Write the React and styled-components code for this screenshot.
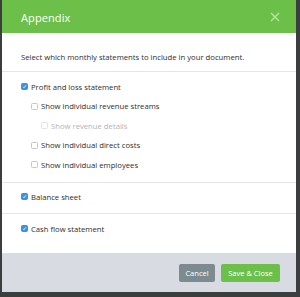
import React from "react";
import styled, { createGlobalStyle } from "styled-components";

const Global = createGlobalStyle`
  html, body { margin:0; padding:0; background:#3b3d3f; }
  body { font-family:"Open Sans", "Liberation Sans", sans-serif; }
`;

const Page = styled.div`
  width:300px;
  height:297px;
  overflow:hidden;
  padding-left:2px;
  box-sizing:border-box;
`;

const Modal = styled.div`
  width:294px;
  background:#fff;
  display:flex;
  flex-direction:column;
`;

const Header = styled.div`
  height:33px;
  background:#6cc04a;
  display:flex;
  align-items:center;
  justify-content:space-between;
  padding:1px 16px 0 19px;
  box-sizing:border-box;
`;

const Title = styled.div`
  color:#fff;
  font-size:11px;
  letter-spacing:0.1px;
`;

const Close = styled.button`
  background:none;
  border:none;
  padding:0;
  width:10px;
  height:10px;
  display:flex;
  cursor:pointer;
`;

const Intro = styled.div`
  padding:18px 19px 8px;
  font-size:7.7px;
  line-height:12px;
  color:#2e2e2e;
  border-bottom:1px solid #e6e6e6;
`;

const Section = styled.div`
  padding:${p => p.$pad};
  border-bottom:${p => (p.$last ? "none" : "1px solid #e6e6e6")};
`;

const Row = styled.label`
  display:flex;
  align-items:center;
  gap:3px;
  height:19.5px;
  padding-left:${p => 19 + p.$level * 10}px;
  font-size:7.7px;
  color:${p => (p.$disabled ? "#b3b3b3" : "#2e2e2e")};
`;

const Box = styled.span`
  width:7px;
  height:7px;
  border-radius:1.5px;
  box-sizing:border-box;
  border:1px solid ${p => (p.$checked ? "#3d8fe6" : p.$disabled ? "#e2e2e2" : "#c6c6c6")};
  background:${p => (p.$checked ? "#3d8fe6" : "#fff")};
  display:flex;
  align-items:center;
  justify-content:center;
`;

const Footer = styled.div`
  height:39px;
  background:#d8dce2;
  display:flex;
  align-items:center;
  justify-content:flex-end;
  gap:6px;
  padding:1px 16px 0 0;
  box-sizing:border-box;
`;

const Btn = styled.button`
  height:18px;
  width:${p => p.$w}px;
  padding:0;
  border:none;
  border-radius:2px;
  font-family:inherit;
  font-size:7.5px;
  color:#fff;
  background:${p => p.$bg};
  cursor:pointer;
`;

function Check({ checked, disabled, label, level = 0 }) {
  return (
    <Row $level={level} $disabled={disabled}>
      <Box $checked={checked} $disabled={disabled}>
        {checked && (
          <svg width="5" height="5" viewBox="0 0 10 10">
            <path d="M2 5.5l2 2 4-5" fill="none" stroke="#fff" strokeWidth="1.6" />
          </svg>
        )}
      </Box>
      {label}
    </Row>
  );
}

export default function App() {
  return (
    <Page>
      <Global />
      <Modal>
        <Header>
          <Title>Appendix</Title>
          <Close>
            <svg width="10" height="10" viewBox="0 0 10 10">
              <path d="M1 1l8 8M9 1l-8 8" stroke="#b2ea9c" strokeWidth="1.3" />
            </svg>
          </Close>
        </Header>
        <Intro>Select which monthly statements to include in your document.</Intro>
        <Section $pad="5px 0 7.5px">
          <Check checked label="Profit and loss statement" />
          <Check level={1} label="Show individual revenue streams" />
          <Check level={2} disabled label="Show revenue details" />
          <Check level={1} label="Show individual direct costs" />
          <Check level={1} label="Show individual employees" />
        </Section>
        <Section $pad="4px 0 6.5px">
          <Check checked label="Balance sheet" />
        </Section>
        <Section $pad="5px 0 14.5px" $last>
          <Check checked label="Cash flow statement" />
        </Section>
        <Footer>
          <Btn $bg="#7c8b8f" $w={36}>Cancel</Btn>
          <Btn $bg="#6cc04a" $w={59}>Save &amp; Close</Btn>
        </Footer>
      </Modal>
    </Page>
  );
}
